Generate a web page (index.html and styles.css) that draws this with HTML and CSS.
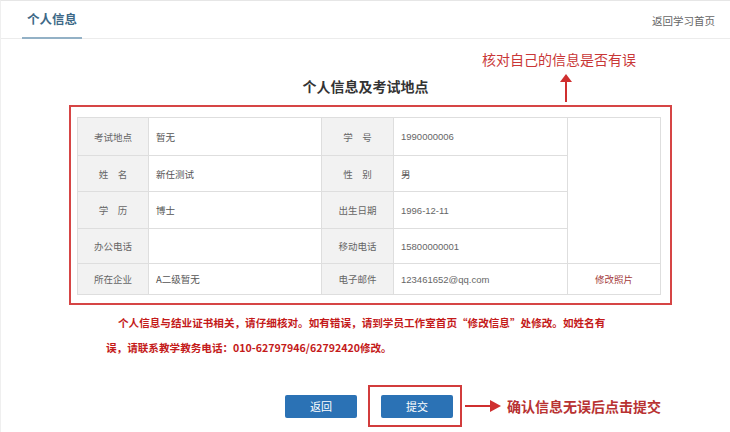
FILE: index.html
```html
<!DOCTYPE html>
<html lang="zh-CN">
<head>
<meta charset="utf-8">
<title>个人信息</title>
<link rel="stylesheet" href="styles.css">
</head>
<body>
<div class="page">
  <header class="header">
    <div class="tab">个人信息</div>
    <a class="home-link">返回学习首页</a>
  </header>
  <main class="main">
    <div class="note-top">核对自己的信息是否有误</div>
    <svg class="arrow-up" width="20" height="28" viewBox="0 0 20 28">
      <polygon points="10,0 4,8 16,8" fill="#cf2f2f"/>
      <rect x="9" y="7" width="2" height="21" fill="#cf2f2f"/>
    </svg>
    <h1 class="title">个人信息及考试地点</h1>
    <div class="redbox">
      <table class="info">
        <colgroup>
          <col class="c1"><col class="c2"><col class="c3"><col class="c4"><col class="c5">
        </colgroup>
        <tr class="r1">
          <th>考试地点</th><td>暂无</td>
          <th>学&emsp;号</th><td class="num">1990000006</td>
          <td class="photo" rowspan="4"></td>
        </tr>
        <tr class="r2">
          <th>姓&emsp;名</th><td>新任测试</td>
          <th>性&emsp;别</th><td>男</td>
        </tr>
        <tr class="r3">
          <th>学&emsp;历</th><td>博士</td>
          <th>出生日期</th><td class="num">1996-12-11</td>
        </tr>
        <tr class="r4">
          <th>办公电话</th><td></td>
          <th>移动电话</th><td class="num">15800000001</td>
        </tr>
        <tr class="r5">
          <th>所在企业</th><td>A二级暂无</td>
          <th>电子邮件</th><td class="num">123461652@qq.com</td>
          <td class="edit">修改照片</td>
        </tr>
      </table>
    </div>
    <p class="notice">个人信息与结业证书相关，请仔细核对。如有错误，请到学员工作室首页“修改信息”处修改。如姓名有<br>误，请联系教学教务电话：010-62797946/62792420修改。</p>
    <div class="actions">
      <button class="btn back">返回</button>
      <div class="btnbox"><button class="btn">提交</button></div>
      <svg class="arrow-right" width="36" height="12" viewBox="0 0 36 12">
        <rect x="0" y="5" width="26" height="2" fill="#cf2f2f"/>
        <polygon points="36,6 25,0 25,12" fill="#cf2f2f"/>
      </svg>
      <span class="note-right">确认信息无误后点击提交</span>
    </div>
  </main>
</div>
</body>
</html>
```

FILE: styles.css
```css
html, body {
  margin: 0;
  padding: 0;
  background: #fff;
}
body {
  font-family: "Noto Sans CJK SC", "Liberation Sans", sans-serif;
  width: 730px;
  height: 432px;
  overflow: hidden;
}
.page {
  border-top: 1px solid #e6e6e6;
  border-left: 1px solid #efefef;
  height: 431px;
}
.header {
  height: 37px;
  border-bottom: 1px solid #ececec;
  display: flex;
  justify-content: space-between;
  align-items: flex-start;
  padding: 0 15px 0 21px;
}
.tab {
  width: 60px;
  height: 38px;
  line-height: 24px;
  padding-top: 6px;
  box-sizing: border-box;
  text-align: center;
  font-size: 12.5px;
  font-weight: 700;
  color: #3e6987;
  border-bottom: 2px solid #93b1c6;
}
.home-link {
  font-size: 10.5px;
  color: #666;
  line-height: 14px;
  margin-top: 13px;
}
.main {
  position: relative;
  padding-top: 37px;
}
.note-top {
  position: absolute;
  left: 481px;
  top: 11px;
  font-size: 14px;
  line-height: 18px;
  color: #c93737;
}
.arrow-up {
  position: absolute;
  left: 555px;
  top: 35px;
}
.title {
  margin: 0;
  text-align: center;
  font-size: 14px;
  line-height: 20px;
  font-weight: 700;
  color: #333;
}
.redbox {
  margin: 9px 0 0 68px;
  width: 583px;
  height: 186px;
  border: 2px solid #d64545;
  padding: 10px 10px 0 6px;
}
.info {
  border-collapse: collapse;
  width: 583px;
  table-layout: fixed;
  font-size: 9.5px;
  color: #555;
}
.c1 { width: 71px; }
.c2 { width: 173px; }
.c3 { width: 72px; }
.c4 { width: 174px; }
.c5 { width: 93px; }
.info th, .info td {
  border: 1px solid #dedede;
  padding: 0;
}
.info th {
  background: #f2f2f2;
  font-weight: 400;
  text-align: center;
  color: #666;
}
.info td {
  padding-left: 7px;
  text-align: left;
}
.info td.num {
  font-family: "Liberation Sans", sans-serif;
  color: #666;
}
.info td.photo {
  background: #fff;
}
.info td.edit {
  text-align: center;
  padding-left: 0;
  color: #a33a3a;
}
.r1 { height: 38px; }
.r2 { height: 36px; }
.r3 { height: 37px; }
.r4 { height: 35px; }
.r5 { height: 31px; }
.notice {
  margin: 5px 0 0 105px;
  font-size: 10.6px;
  line-height: 25px;
  font-weight: 700;
  color: #c41a1a;
  text-indent: 12px;
  white-space: nowrap;
}
.actions {
  margin-top: 25px;
  display: flex;
  align-items: center;
  padding-left: 284px;
}
.btn {
  width: 72px;
  height: 23px;
  border: none;
  border-radius: 2px;
  background: #2b72b5;
  color: #fff;
  font-family: "Noto Sans CJK SC", sans-serif;
  font-size: 11px;
  padding: 0;
}
.back {
  margin-right: 11px;
}
.btnbox {
  border: 2px solid #d23c3c;
  height: 38px;
  width: 72px;
  display: flex;
  align-items: center;
  padding: 0 7px 0 11px;
}
.arrow-right {
  margin-left: 3px;
}
.note-right {
  margin-left: 6px;
  font-size: 14px;
  color: #b83232;
  font-weight: 700;
  line-height: 18px;
}
```
